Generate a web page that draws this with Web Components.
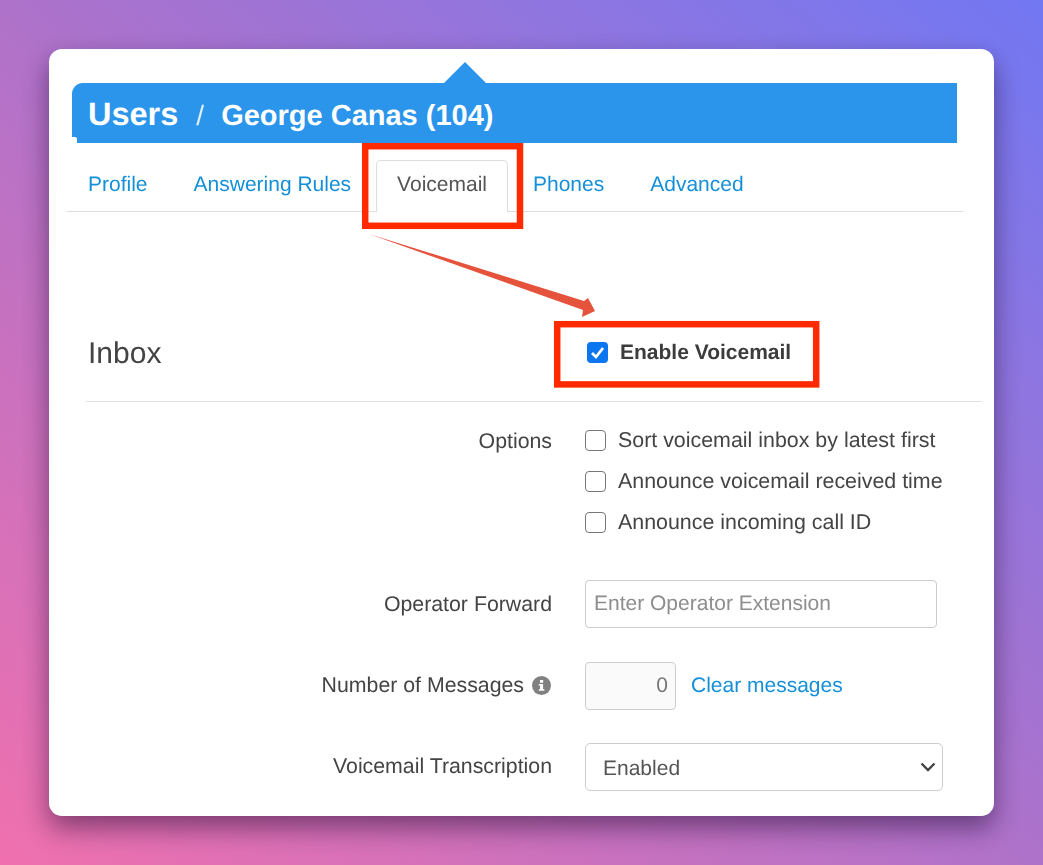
<!DOCTYPE html>
<html lang="en">
<head>
<meta charset="utf-8">
<title>Voicemail</title>
<style>
  html, body { margin: 0; height: 100%; }
  body { font-family: "Liberation Sans", Arial, sans-serif; color: #444; text-rendering: geometricPrecision; }
</style>
</head>
<body>
<voicemail-page>
  <title-bar></title-bar>
  <tab-bar></tab-bar>
  <section-head title="Inbox" label="Enable Voicemail"></section-head>
  <form-row label="Options" class="options">
    <check-item label="Sort voicemail inbox by latest first"></check-item>
    <check-item label="Announce voicemail received time"></check-item>
    <check-item label="Announce incoming call ID"></check-item>
  </form-row>
  <form-row label="Operator Forward" class="forward">
    <text-box width="352" muted>Enter Operator Extension</text-box>
  </form-row>
  <form-row label="Number of Messages" info class="messages">
    <text-box width="91" right readonly>0</text-box>
    <a href="#clear" class="link">Clear messages</a>
  </form-row>
  <form-row label="Voicemail Transcription" class="transcription">
    <select-box width="358">Enabled</select-box>
  </form-row>
</voicemail-page>

<script>
class VoicemailPage extends HTMLElement {
	constructor() {
		super();
		this.attachShadow({ mode: 'open' });
		this.shadowRoot.innerHTML = `
      <style>
        :host {
          display: block;
          box-sizing: border-box;
          width: 1043px;
          height: 865px;
          padding: 49px;
          overflow: hidden;
          background: linear-gradient(to top right, #f070ae 0%, #ae72ca 50%, #7278f3 100%);
        }
        .card {
          height: 767px;
          background: #fff;
          border-radius: 13px;
          box-shadow: 0 12px 26px rgba(20, 5, 40, 0.48);
        }
        .inner {
          position: relative;
          box-sizing: border-box;
          height: 767px;
          padding-top: 13px;
          overflow: hidden;
          filter: blur(0.35px);
        }
        /* annotations drawn on top of the screenshot */
        .marks {
          position: absolute;
          left: 0;
          top: 0;
          width: 945px;
          height: 767px;
          pointer-events: none;
        }
      </style>
      <div class="card">
        <div class="inner">
          <slot></slot>
          <svg class="marks" viewBox="49 49 945 767">
            <rect x="365.2" y="146.2" width="154.8" height="79.6" fill="none" stroke="#ff2a00" stroke-width="6.5"/>
            <rect x="557.2" y="324.2" width="259" height="60.2" fill="none" stroke="#ff2a00" stroke-width="6.5"/>
            <polygon points="369,234 584,301 588,298 595,311 582,317 583,310" fill="#e5533d"/>
          </svg>
        </div>
      </div>
    `;
	}
}

class TitleBar extends HTMLElement {
	constructor() {
		super();
		this.attachShadow({ mode: 'open' });
		this.shadowRoot.innerHTML = `
      <style>
        :host {
          display: block;
          position: relative;
          box-sizing: border-box;
          width: 885px;
          height: 60px;
          margin: 21px 0 0 23px;
          padding: 0 0 0 16px;
          color: #fff;
          font-weight: 700;
          background: #2a95ea;
          border-radius: 11px 0 0 0;
        }
        .tip {
          position: absolute;
          left: 372px;
          top: -21px;
        }
        /* the little step at the bottom left corner */
        .step {
          position: absolute;
          left: 0;
          bottom: 0;
          width: 5px;
          height: 6px;
          background: #fff;
          border-top-right-radius: 2px;
        }
        .text {
          display: flex;
          align-items: baseline;
          height: 60px;
          line-height: 62px;
          white-space: nowrap;
        }
        .users { font-size: 32.5px; }
        .sep { font-size: 28px; font-weight: 400; margin: 0 17px 0 18px; opacity: .85; }
        .name { font-size: 29px; }
      </style>
      <svg class="tip" width="42" height="21" viewBox="0 0 42 21"><polygon points="21,0 42,21 0,21" fill="#2a95ea"/></svg>
      <div class="step"></div>
      <div class="text">
        <span class="users">Users</span><span class="sep">/</span><span class="name">George Canas (104)</span>
      </div>
    `;
	}
}

class TabBar extends HTMLElement {
	constructor() {
		super();
		this.attachShadow({ mode: 'open' });
		this.shadowRoot.innerHTML = `
      <style>
        :host {
          display: block;
          box-sizing: border-box;
          width: 896px;
          height: 69px;
          margin: 0 0 0 18px;
          padding-top: 17px;
          border-bottom: 1px solid #ddd;
        }
        ul {
          display: flex;
          margin: 0;
          padding: 0;
          list-style-type: none;
          font-size: 21px;
        }
        li { margin-right: 4px; }
        a {
          display: block;
          box-sizing: border-box;
          height: 52px;
          padding: 0 20px;
          border: 1px solid transparent;
          border-bottom: 0;
          border-radius: 5px 5px 0 0;
          line-height: 48px;
          color: #1590d8;
          text-decoration: none;
        }
        a.active {
          color: #555;
          background: #fff;
          border-color: #ddd;
        }
      </style>
      <ul>
        <li><a href="#profile">Profile</a></li>
        <li><a href="#rules">Answering Rules</a></li>
        <li><a class="active" href="#voicemail">Voicemail</a></li>
        <li><a href="#phones">Phones</a></li>
        <li><a href="#advanced">Advanced</a></li>
      </ul>
    `;
	}
}

class SectionHead extends HTMLElement {
	constructor() {
		super();
		this.attachShadow({ mode: 'open' });
		this.shadowRoot.innerHTML = `
      <style>
        :host {
          display: grid;
          grid-template-columns: 499px 1fr;
          align-items: center;
          box-sizing: border-box;
          width: 896px;
          height: 105px;
          margin: 85px 0 0 37px;
          padding: 10px 0 0 2px;
          border-bottom: 1px solid #e3e3e3;
        }
        h2 { margin: 0; font-size: 30px; font-weight: 400; color: #444; }
        check-item { margin-bottom: 3px; }
      </style>
      <h2></h2>
      <check-item checked bold></check-item>
    `;
		this.shadowRoot.querySelector('h2').textContent = this.getAttribute('title');
		this.shadowRoot.querySelector('check-item').setAttribute('label', this.getAttribute('label'));
	}
}

class FormRow extends HTMLElement {
	constructor() {
		super();
		this.attachShadow({ mode: 'open' });
		this.shadowRoot.innerHTML = `
      <style>
        :host {
          display: grid;
          grid-template-columns: 503px 1fr;
          column-gap: 33px;
          box-sizing: border-box;
          margin-top: var(--row-top, 0);
          font-size: 21.3px;
          color: #444;
        }
        .label {
          display: flex;
          justify-content: flex-end;
          align-items: center;
          gap: 8px;
          box-sizing: border-box;
          height: 48px;
          padding: var(--label-pad, 0);
        }
        :host([class~="options"]) .label { height: 36px; }
        .field {
          display: flex;
          flex-direction: var(--field-dir, row);
          align-items: var(--field-align, center);
          gap: var(--field-gap, 15px);
          font-size: 21px;
        }
        svg { display: none; margin-right: 1px; }
        :host([info]) svg { display: block; }
      </style>
      <div class="label">
        <span class="name"></span>
        <svg width="19" height="19" viewBox="0 0 19 19">
          <circle cx="9.5" cy="9.5" r="9.5" fill="#808080"/>
          <rect x="8" y="4" width="3.2" height="2.8" fill="#fff"/>
          <path d="M6.8 8h4.3v5.2h1.3v1.6H6.8v-1.6h1.3V9.6H6.8z" fill="#fff"/>
        </svg>
      </div>
      <div class="field"><slot></slot></div>
    `;
		this.shadowRoot.querySelector('.name').textContent = this.getAttribute('label');
	}
}

class CheckItem extends HTMLElement {
	constructor() {
		super();
		this.attachShadow({ mode: 'open' });
		const checked = this.hasAttribute('checked');
		this.shadowRoot.innerHTML = `
      <style>
        :host {
          display: flex;
          align-items: center;
          gap: 12px;
          height: 36px;
          font-size: 21.4px;
          color: #444;
        }
        :host([bold]) { font-weight: 700; font-size: 21px; color: #3c3c3c; gap: 12px; }
        :host([bold]) .text { padding-top: 1px; }
        .box {
          box-sizing: border-box;
          flex: none;
          width: 21px;
          height: 21px;
          border: 1.5px solid #767676;
          border-radius: 4px;
          background: #fff;
        }
        .box.on { border: 0; background: #0b76f0; }
        .box svg { display: block; }
      </style>
      <span class="box${checked ? ' on' : ''}">${checked ? '<svg width="21" height="21" viewBox="0 0 21 21"><path d="M5 11l4 4 7-9" fill="none" stroke="#fff" stroke-width="2.8"/></svg>' : ''}</span>
      <span class="text"></span>
    `;
		this.shadowRoot.querySelector('.text').textContent = this.getAttribute('label');
	}
}

class TextBox extends HTMLElement {
	constructor() {
		super();
		this.attachShadow({ mode: 'open' });
		this.shadowRoot.innerHTML = `
      <style>
        :host {
          display: block;
          box-sizing: border-box;
          flex: none;
          height: 48px;
          padding: 0 8px;
          border: 1px solid #ccc;
          border-radius: 4px;
          background: #fff;
          line-height: 46px;
          font-size: 21px;
          color: #777;
          white-space: nowrap;
        }
        :host([muted]) { color: #8e8e8e; }
        :host([right]) { text-align: right; }
        :host([readonly]) { background: #fafafa; padding-right: 7px; }
      </style>
      <slot></slot>
    `;
		this.style.width = this.getAttribute('width') + 'px';
	}
}

class SelectBox extends HTMLElement {
	constructor() {
		super();
		this.attachShadow({ mode: 'open' });
		this.shadowRoot.innerHTML = `
      <style>
        :host {
          display: flex;
          justify-content: space-between;
          align-items: center;
          box-sizing: border-box;
          flex: none;
          height: 48px;
          padding: 0 5px 0 17px;
          border: 1px solid #ccc;
          border-radius: 5px;
          background: #fff;
          font-size: 21px;
          color: #555;
        }
        .value { padding-top: 3px; }
      </style>
      <span class="value"><slot></slot></span>
      <svg width="18" height="12" viewBox="0 0 18 12"><path d="M2.5 2.5l6.5 6.5 6.5-6.5" fill="none" stroke="#444" stroke-width="2.4"/></svg>
    `;
		this.style.width = this.getAttribute('width') + 'px';
	}
}

customElements.define('voicemail-page', VoicemailPage);
customElements.define('title-bar', TitleBar);
customElements.define('tab-bar', TabBar);
customElements.define('section-head', SectionHead);
customElements.define('form-row', FormRow);
customElements.define('check-item', CheckItem);
customElements.define('text-box', TextBox);
customElements.define('select-box', SelectBox);

// row spacing, set from here because the rows are all the same element
const rows = { options: '20px', forward: '40px', messages: '34px', transcription: '33px' };
const labelPads = { options: '2px 0 0', messages: '0 0 2px', transcription: '0 0 2px' };
document.querySelectorAll('form-row').forEach((row) => {
	row.style.setProperty('--row-top', rows[row.className]);
	if (labelPads[row.className]) row.style.setProperty('--label-pad', labelPads[row.className]);
});
document.querySelector('form-row.options').style.setProperty('--field-dir', 'column');
document.querySelector('form-row.options').style.setProperty('--field-align', 'stretch');
document.querySelector('form-row.options').style.setProperty('--field-gap', '5px');
const link = document.querySelector('.link');
link.style.cssText = 'color:#1590d8;text-decoration:none;font-size:21px;';
</script>
</body>
</html>
